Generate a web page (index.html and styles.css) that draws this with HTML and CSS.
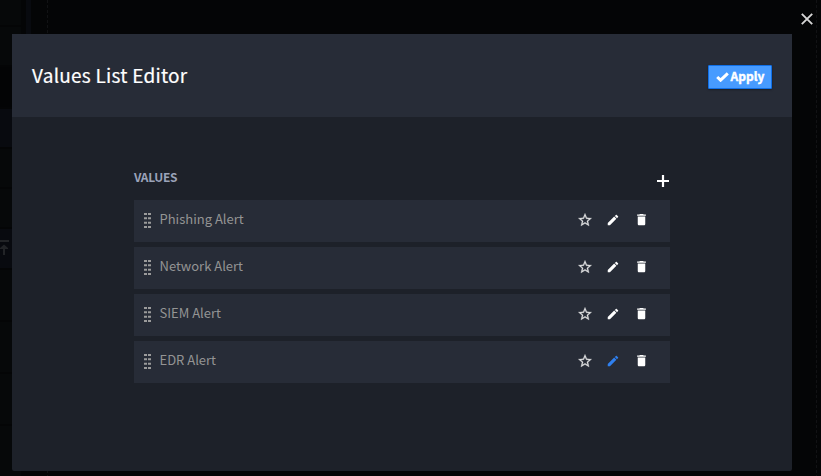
FILE: index.html
```html
<!DOCTYPE html>
<html lang="en">
<head>
<meta charset="utf-8">
<title>Values List Editor</title>
<link rel="stylesheet" href="styles.css">
</head>
<body>
<svg class="defs" width="0" height="0" aria-hidden="true">
  <symbol id="star" viewBox="0 0 24 24"><path d="M22 9.24l-7.19-.62L12 2 9.19 8.63 2 9.24l5.46 4.73L5.82 21 12 17.27 18.18 21l-1.63-7.03L22 9.24zM12 15.4l-3.76 2.27 1-4.28-3.32-2.88 4.38-.38L12 6.1l1.71 4.04 4.38.38-3.32 2.88 1 4.28L12 15.4z"/></symbol>
  <symbol id="edit" viewBox="0 0 24 24"><path d="M3 17.25V21h3.75L17.81 9.94l-3.75-3.75L3 17.25zM20.71 7.04c.39-.39.39-1.02 0-1.41l-2.34-2.34c-.39-.39-1.02-.39-1.41 0l-1.83 1.83 3.75 3.75 1.83-1.83z"/></symbol>
  <symbol id="trash" viewBox="0 0 24 24"><path d="M6 19c0 1.1.9 2 2 2h8c1.1 0 2-.9 2-2V7H6v12zM19 4h-3.5l-1-1h-5l-1 1H5v2h14V4z"/></symbol>
  <symbol id="grip" viewBox="0 0 7 16"><path d="M0 1h3v2H0zM4 1h3v2H4zM0 5.3h3v2H0zM4 5.3h3v2H4zM0 9.7h3v2H0zM4 9.7h3v2H4zM0 14h3v2H0zM4 14h3v2H4z"/></symbol>
</svg>
<div class="backdrop">
  <div class="cells">
    <i class="h25"></i><i class="h38"></i><i class="h40 gap"></i><i class="h38 blue"></i><i class="h38"></i><i class="h38"></i>
    <i class="h39 blue"><svg width="9" height="16" viewBox="0 0 9 16"><path d="M0 0h9v2H0zM3 15V9H0V8l4-3.5L8 8v1H5v6z"/></svg></i>
    <i class="h50"></i><i class="h50"></i><i class="h50"></i><i class="h45"></i>
  </div>
  <div class="strip"></div>
  <div class="dash dash-left"></div>
  <div class="dash dash-right"></div>
</div>
<button class="close" aria-label="Close"><svg width="12" height="12" viewBox="0 0 12 12"><path d="M.8.8l10.4 10.4M11.2.8L.8 11.2"/></svg></button>
<main class="modal">
  <header class="modal-header">
    <h1>Values List Editor</h1>
    <button class="apply"><svg width="13" height="10" viewBox="0 0 13 10"><path d="M1.2 5l3.4 3.2L11.8 1.4"/></svg><span>Apply</span></button>
  </header>
  <section class="modal-body">
    <div class="list-head">
      <h2>VALUES</h2>
      <svg class="plus" width="12" height="12" viewBox="0 0 12 12"><path d="M6 0v12M0 6h12"/></svg>
    </div>
    <ul class="values">
      <li><svg class="grip"><use href="#grip"/></svg><span>Phishing Alert</span><svg class="star"><use href="#star"/></svg><svg class="edit"><use href="#edit"/></svg><svg class="trash"><use href="#trash"/></svg></li>
      <li><svg class="grip"><use href="#grip"/></svg><span>Network Alert</span><svg class="star"><use href="#star"/></svg><svg class="edit"><use href="#edit"/></svg><svg class="trash"><use href="#trash"/></svg></li>
      <li><svg class="grip"><use href="#grip"/></svg><span>SIEM Alert</span><svg class="star"><use href="#star"/></svg><svg class="edit"><use href="#edit"/></svg><svg class="trash"><use href="#trash"/></svg></li>
      <li><svg class="grip"><use href="#grip"/></svg><span>EDR Alert</span><svg class="star"><use href="#star"/></svg><svg class="edit active"><use href="#edit"/></svg><svg class="trash"><use href="#trash"/></svg></li>
    </ul>
  </section>
</main>
</body>
</html>
```
FILE: styles.css
```css
* { box-sizing: border-box; }
body {
  margin: 0;
  height: 476px;
  overflow: hidden;
  position: relative;
  background: #040506;
  font-family: "Source Sans Pro", "Noto Sans CJK SC", sans-serif;
}
button { border: 0; padding: 0; font: inherit; }
.defs { position: absolute; }

/* dimmed page behind the dialog */
.backdrop { position: absolute; inset: 0; }
.cells { width: 21px; display: flex; flex-direction: column; gap: 2px; }
.cells i { background: #060809; flex: none; }
.cells .gap { background: #030405; }
.cells .blue { background: #080a0f; }
.cells svg { display: block; margin-top: 11px; fill: #222427; }
.h25 { height: 25px; }
.h38 { height: 38px; }
.h39 { height: 39px; }
.h40 { height: 40px; }
.h45 { height: 50px; }
.h50 { height: 50px; }
.strip { position: absolute; left: 26px; top: 0; width: 5px; height: 34px; background: #080a0f; }
.dash {
  position: absolute; top: 0; width: 1px; height: 476px;
  background: repeating-linear-gradient(#111214 0 3px, transparent 3px 5px);
}
.dash-left { left: 47px; }
.dash-right { left: 816px; }

.close { position: absolute; left: 801px; top: 13px; width: 12px; height: 12px; background: none; }
.close svg { display: block; fill: none; stroke: #d6d6d6; stroke-width: 1.9; }

.modal {
  position: relative;
  width: 780px;
  height: 437px;
  margin: 34px 0 0 12px;
  background: #1d2129;
  border-radius: 0 0 2px 2px;
}
.modal-header {
  height: 83px;
  padding: 0 20px;
  display: flex;
  align-items: center;
  justify-content: space-between;
  background: #272c37;
}
h1 {
  margin: 0 0 2px;
  font-size: 19px;
  font-weight: 400;
  line-height: 28px;
  letter-spacing: .25px;
  color: #fff;
  -webkit-text-stroke: .2px #fff;
}
.apply {
  width: 64px;
  height: 24px;
  margin-top: 2px;
  display: flex;
  align-items: center;
  justify-content: center;
  gap: 2px;
  border: 1px solid #1070e8;
  border-radius: 1px;
  background: #479bff;
  color: #fff;
  font-size: 12px;
  font-weight: 700;
  line-height: 20px;
  -webkit-text-stroke: .4px #fff;
  box-shadow: 0 1px 2px rgba(0, 0, 0, .3);
}
.apply span { margin-bottom: 2px; }
.apply svg { fill: none; stroke: #fff; stroke-width: 3; }

.modal-body { padding: 50px 122px 0; }
.list-head { height: 33px; display: flex; justify-content: space-between; }
h2 { margin: 0; font-size: 12px; font-weight: 700; line-height: 20px; letter-spacing: -.35px; color: #9ba3b9; }
.plus { margin: 8px 1px 0 0; fill: none; stroke: #fff; stroke-width: 2.2; }
.values { margin: 0; padding: 0; list-style: none; display: flex; flex-direction: column; gap: 5px; }
.values li {
  height: 42px;
  padding: 0 21px 3px 10px;
  display: flex;
  align-items: center;
  background: #272c37;
  color: #949494;
  font-size: 13px;
  line-height: 20px;
}
.values span { flex: 1; margin: 0 0 2px 8.5px; }
.values svg { flex: none; fill: #fff; }
.values .grip { width: 7px; height: 16px; fill: #9b9b9b; }
.values .star { width: 16px; height: 16px; margin-right: 13px; fill: #dfe0e2; stroke: #dfe0e2; stroke-width: .4px; }
.values .edit { width: 14px; height: 14px; margin-right: 14.5px; }
.values .edit.active { fill: #2f80f0; }
.values .trash { width: 15px; height: 15px; }
```
